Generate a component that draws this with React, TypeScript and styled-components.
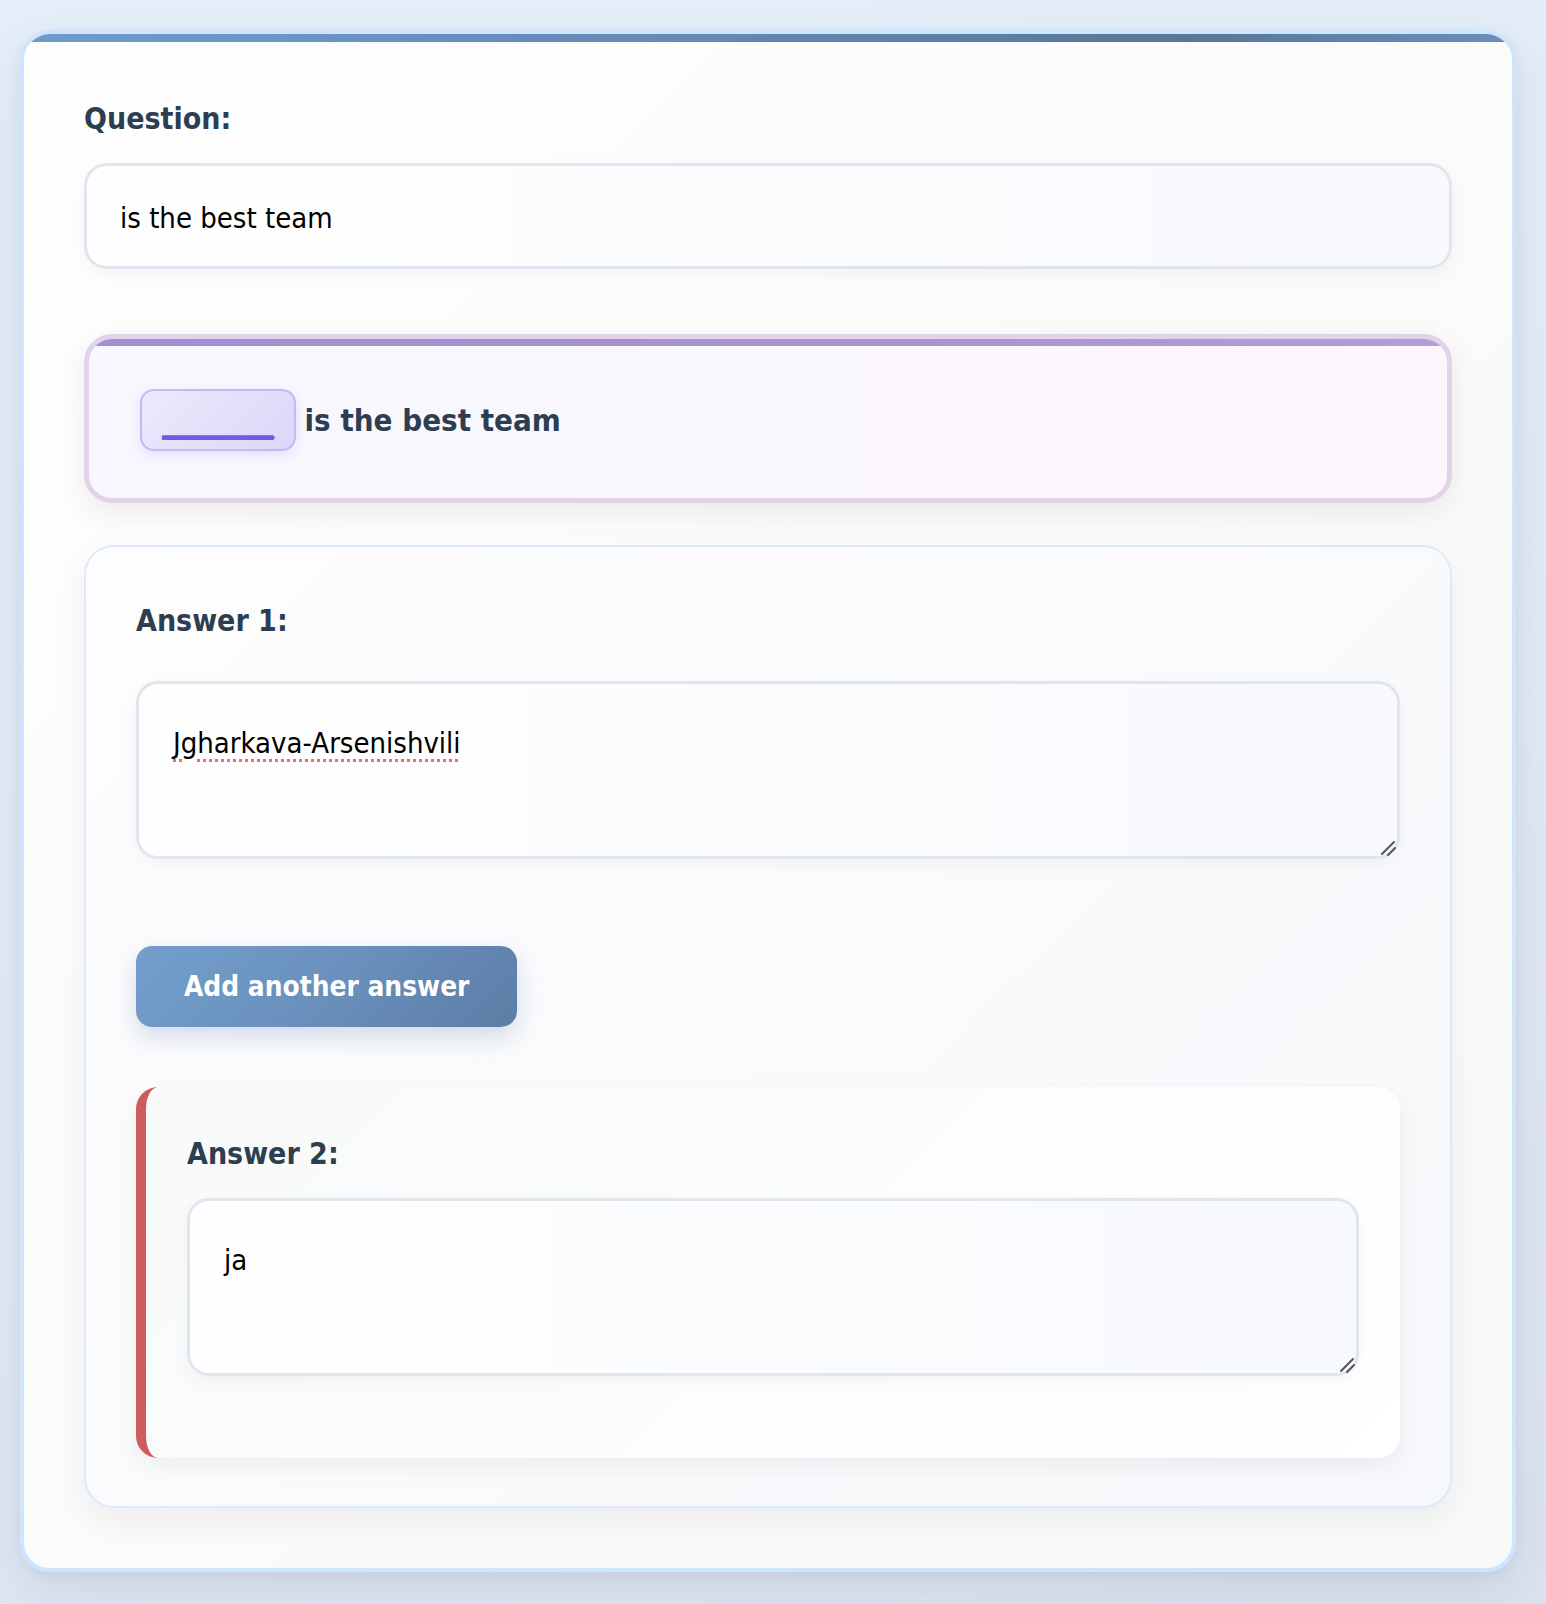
import React from "react";
import styled, { createGlobalStyle } from "styled-components";

const FONT = `"DejaVu Sans Condensed", "Liberation Sans", sans-serif`;

const GlobalStyle = createGlobalStyle`
  html, body {
    margin: 0;
    padding: 0;
  }
  body {
    min-height: 1604px;
    background: linear-gradient(160deg, #e5eff9 0%, #e3ebf6 50%, #dce3ee 100%);
    font-family: ${FONT};
    font-stretch: condensed;
  }
  * { box-sizing: border-box; }
`;

const Page = styled.div`
  padding: 30px 30px 31px 20px;
`;

const Card = styled.div`
  position: relative;
  overflow: hidden;
  border: 4px solid #cfe5fd;
  border-radius: 30px;
  background: linear-gradient(135deg, #fefefe 0%, #fafafa 60%, #f8f9f9 100%);
  box-shadow: 0 20px 50px rgba(60, 80, 120, 0.12), 0 4px 12px rgba(60, 80, 120, 0.05);
  padding: 67px 60px 60px;

  &::before {
    content: "";
    position: absolute;
    top: 0;
    left: 0;
    right: 0;
    height: 8px;
    background: linear-gradient(90deg, #6f9ccb 0%, #6489b4 45%, #577798 78%, #6a8fbc 100%);
  }
`;

const Label = styled.label<{ $gap: number }>`
  display: block;
  font-family: ${FONT};
  font-stretch: condensed;
  font-weight: 700;
  font-size: 30px;
  line-height: 36px;
  color: #2c3e50;
  margin-bottom: ${(p) => p.$gap}px;
`;

const QuestionInput = styled.input`
  display: block;
  width: 100%;
  height: 106px;
  padding: 4px 33px 0;
  border: 3px solid #dfe6ef;
  border-radius: 23px;
  background: linear-gradient(90deg, #fefefe 0%, #f8f9fd 100%);
  box-shadow: 0 6px 16px rgba(0, 0, 0, 0.04);
  font-family: ${FONT};
  font-stretch: condensed;
  font-size: 29px;
  color: #000;
  outline: none;
`;

const Preview = styled.div`
  position: relative;
  overflow: hidden;
  margin-top: 65px;
  height: 169px;
  border: 5px solid #e2d4e8;
  border-radius: 28px;
  background: linear-gradient(90deg, #f7f7ff 0%, #fbf7fd 60%, #fdf6fc 100%);
  box-shadow: 0 10px 30px rgba(0, 0, 0, 0.07);
  padding: 0 51px;
  display: flex;
  align-items: center;

  &::before {
    content: "";
    position: absolute;
    top: 0;
    left: 0;
    right: 0;
    height: 7px;
    background: linear-gradient(90deg, #a48fd0 0%, #a993d2 60%, #b39ddb 100%);
  }
`;

const Sentence = styled.div`
  display: flex;
  align-items: baseline;
  gap: 9px;
  margin-top: 2px;
  font-family: ${FONT};
  font-stretch: condensed;
  font-weight: 700;
  font-size: 31px;
  line-height: 36px;
  color: #2c3e50;
`;

const Blank = styled.span`
  display: inline-block;
  padding: 11px 20px;
  border: 2px solid #c5b8f4;
  border-radius: 14px;
  background: linear-gradient(135deg, #ede9fc 0%, #ddd6f8 100%);
  box-shadow: 0 4px 12px rgba(108, 92, 231, 0.15);
  color: #6c5ce7;
  text-shadow: 0 1px 0 #6c5ce7, 0 2px 0 #6c5ce7, 1px 1px 0 #6c5ce7;
`;

const Answers = styled.div`
  margin-top: 42px;
  border: 2px solid #dcebfc;
  border-radius: 30px;
  background: linear-gradient(135deg, #fdfdfe 0%, #f7f8fb 100%);
  box-shadow: 0 12px 32px rgba(0, 0, 0, 0.06);
  padding: 56px 50px 48px 50px;
`;

const AreaWrap = styled.div`
  position: relative;
`;

const AnswerArea = styled.textarea<{ $misspelled?: boolean }>`
  display: block;
  width: 100%;
  height: 178px;
  padding: 35px 34px 33px;
  border: 3px solid #dfe6ef;
  border-radius: 22px;
  background: linear-gradient(90deg, #fefefe 0%, #f8f9fd 100%);
  box-shadow: 0 6px 16px rgba(0, 0, 0, 0.04);
  font-family: ${FONT};
  font-stretch: condensed;
  font-size: 29px;
  line-height: 48px;
  color: #000;
  outline: none;
  resize: none;
  ${(p) =>
    p.$misspelled &&
    `text-decoration: underline dotted #f06a6a; text-decoration-thickness: 3px; text-underline-offset: 6px;`}
`;

const Grip = styled.svg`
  position: absolute;
  right: 4px;
  bottom: 3px;
  width: 16px;
  height: 16px;
  pointer-events: none;
`;

const AddButton = styled.button`
  display: block;
  margin: 87px 0 0 0;
  height: 81px;
  padding: 0 48px;
  border: none;
  border-radius: 16px;
  background: linear-gradient(135deg, #739fcc 0%, #6a90bd 50%, #5c7da5 100%);
  box-shadow: 0 10px 24px rgba(90, 124, 170, 0.25);
  color: #fff;
  font-family: ${FONT};
  font-stretch: condensed;
  font-weight: 700;
  font-size: 27.8px;
  cursor: pointer;
`;

const AnswerCard = styled.div`
  margin: 60px 0 0 0;
  border-left: 10px solid #cd5c5c;
  border-radius: 22px;
  background: linear-gradient(135deg, #f8f9fa 0%, #fdfdfd 60%, #ffffff 100%);
  box-shadow: 0 8px 24px rgba(0, 0, 0, 0.06);
  padding: 49px 41px 82px 41px;
`;

function AnswerField({ value, misspelled }: { value: string; misspelled?: boolean }) {
  return (
    <AreaWrap>
      <AnswerArea $misspelled={misspelled} defaultValue={value} spellCheck={false} />
      <Grip viewBox="0 0 16 16" aria-hidden="true">
        <line x1="2" y1="14" x2="14" y2="2" stroke="#555" strokeWidth="2" strokeLinecap="round" />
        <line x1="8" y1="15" x2="15" y2="8" stroke="#555" strokeWidth="2" strokeLinecap="round" />
      </Grip>
    </AreaWrap>
  );
}

export default function App() {
  return (
    <>
      <GlobalStyle />
      <Page>
        <Card>
          <Label $gap={26}>Question:</Label>
          <QuestionInput defaultValue="is the best team" />
          <Preview>
            <Sentence>
              <Blank>________</Blank>
              <span>is the best team</span>
            </Sentence>
          </Preview>
          <Answers>
            <Label $gap={42}>Answer 1:</Label>
            <AnswerField value="Jgharkava-Arsenishvili" misspelled />
            <AddButton type="button">Add another answer</AddButton>
            <AnswerCard>
              <Label $gap={26}>Answer 2:</Label>
              <AnswerField value="ja" />
            </AnswerCard>
          </Answers>
        </Card>
      </Page>
    </>
  );
}
